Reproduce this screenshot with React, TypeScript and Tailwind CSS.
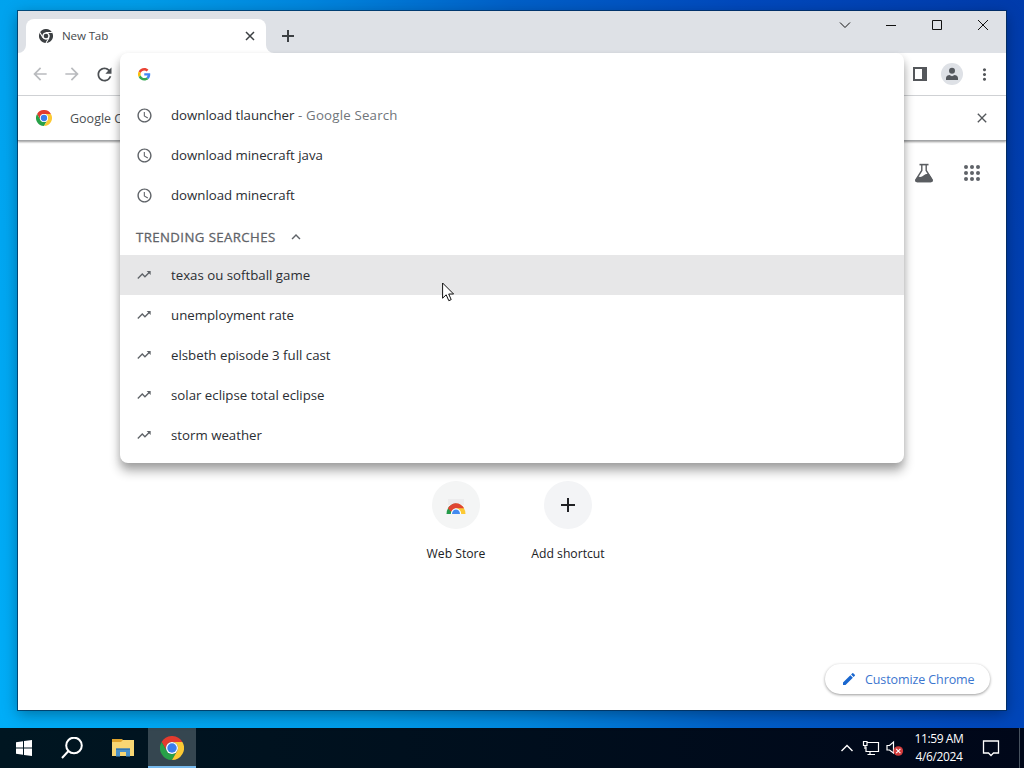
import React from "react";
import {
  MdAccessTime,
  MdAdd,
  MdArrowBack,
  MdArrowForward,
  MdClose,
  MdEdit,
  MdKeyboardArrowUp,
  MdMoreVert,
  MdRefresh,
  MdTrendingUp,
} from "react-icons/md";

const history = [
  { text: "download tlauncher", suffix: "Google Search" },
  { text: "download minecraft java" },
  { text: "download minecraft" },
];

const trending = [
  "texas ou softball game",
  "unemployment rate",
  "elsbeth episode 3 full cast",
  "solar eclipse total eclipse",
  "storm weather",
];

const suggestRow = "flex h-10 items-center pl-4 text-[13.25px] text-[#2b2e33]";

function ChromeLogo({ className, mono = false }: { className: string; mono?: boolean }) {
  const c = mono ? ["#3c4043", "#3c4043", "#3c4043", "#3c4043"] : ["#e33b2e", "#28a148", "#fcc934", "#3b7ded"];
  return (
    <svg viewBox="0 0 48 48" className={className}>
      <path d="M3.2 12A24 24 0 0 1 44.8 12H24A12 12 0 0 0 13.6 30Z" fill={c[0]} />
      <path d="M3.2 12A24 24 0 0 0 24 48L34.4 30A12 12 0 0 1 13.6 30Z" fill={c[1]} />
      <path d="M44.8 12A24 24 0 0 1 24 48L34.4 30A12 12 0 0 0 24 12Z" fill={c[2]} />
      {mono && (
        <path d="M24 12H45M13.6 30L3.2 12M34.4 30L24 48" stroke="#fff" strokeWidth="3.5" fill="none" />
      )}
      <circle cx="24" cy="24" r="12" fill="#fff" />
      <circle cx="24" cy="24" r={mono ? 8 : 9.5} fill={c[3]} />
    </svg>
  );
}

function GoogleG() {
  return (
    <svg viewBox="0 0 48 48" className="size-[12.5px]">
      <path fill="#EA4335" d="M24 9.5c3.54 0 6.71 1.22 9.21 3.6l6.85-6.85C35.9 2.38 30.47 0 24 0 14.62 0 6.51 5.38 2.56 13.22l7.98 6.19C12.43 13.72 17.74 9.5 24 9.5z" />
      <path fill="#4285F4" d="M46.98 24.55c0-1.57-.15-3.09-.38-4.55H24v9.02h12.94c-.58 2.96-2.26 5.48-4.78 7.18l7.73 6c4.51-4.18 7.09-10.36 7.09-17.65z" />
      <path fill="#FBBC05" d="M10.53 28.59c-.48-1.45-.76-2.99-.76-4.59s.27-3.14.76-4.59l-7.98-6.19C.92 16.46 0 20.12 0 24s.92 7.54 2.56 10.78z" />
      <path fill="#34A853" d="M24 48c6.48 0 11.93-2.13 15.89-5.81l-7.73-6c-2.15 1.45-4.92 2.3-8.16 2.3-6.26 0-11.57-4.22-13.47-9.91l-7.98 6.19C6.51 42.62 14.62 48 24 48z" />
    </svg>
  );
}

function TabStrip() {
  return (
    <div className="flex h-[42px] bg-[#dee1e6]">
      <div className="flex w-2 items-end">
        <svg viewBox="0 0 8 8" className="size-2">
          <path d="M8 0V8H0A8 8 0 0 0 8 0Z" fill="#fff" />
        </svg>
      </div>
      <div className="mt-2 flex w-60 items-center rounded-t-lg bg-white pl-[13px] pr-[10px]">
        <ChromeLogo mono className="size-[14px]" />
        <span className="ml-[9px] flex-1 pb-px text-[11.6px] tracking-[-0.15px] text-[#45494d]">New Tab</span>
        <svg viewBox="0 0 12 12" className="size-3">
          <path d="M2 2L10 10M10 2L2 10" stroke="#3c4043" strokeWidth="1.5" />
        </svg>
      </div>
      <div className="flex w-2 items-end">
        <svg viewBox="0 0 8 8" className="size-2">
          <path d="M0 0V8H8A8 8 0 0 1 0 0Z" fill="#fff" />
        </svg>
      </div>
      <div className="mt-[18px] ml-[7px] flex-1">
        <svg viewBox="0 0 14 14" className="size-[14px]">
          <path d="M7 1V13M1 7H13" stroke="#3c4043" strokeWidth="2" />
        </svg>
      </div>
      <div className="flex h-7 items-center">
        {["M3 5.5L8 10.5L13 5.5", "M3 8.5H13", "M3.5 3.5H12.5V12.5H3.5Z", "M3 3L13 13M13 3L3 13"].map((d) => (
          <div key={d} className="flex w-[46px] justify-center">
            <svg viewBox="0 0 16 16" className="size-4">
              <path d={d} fill="none" stroke="#111" strokeWidth="1" />
            </svg>
          </div>
        ))}
      </div>
    </div>
  );
}

function Toolbar() {
  return (
    <div className="flex h-[43px] items-center border-b border-[#d5d7da] bg-white">
      <div className="flex items-center gap-3 pl-3">
        <MdArrowBack className="size-5 text-[#b9bbbe]" />
        <MdArrowForward className="size-5 text-[#b9bbbe]" />
        <MdRefresh className="size-[21px] text-[#4c5054]" />
      </div>
      <div className="ml-auto flex items-center pr-3">
        <svg viewBox="0 0 14 14" className="size-[14px]">
          <path d="M1 1H13V13H1Z" fill="none" stroke="#54575b" strokeWidth="2" />
          <path d="M9 1H13V13H9Z" fill="#54575b" />
        </svg>
        <div className="ml-[14px] flex size-[22px] items-center justify-center rounded-full bg-[#dee1e6]">
          <svg viewBox="0 0 14 14" className="size-[14px]">
            <circle cx="7" cy="3.7" r="3" fill="#54585d" />
            <path d="M1 13V11C1 9 3 8 4.5 8L7 9.3L9.5 8C11 8 13 9 13 11V13Z" fill="#54585d" />
          </svg>
        </div>
        <MdMoreVert className="ml-3 size-[19px] text-[#54575b]" />
      </div>
    </div>
  );
}

function InfoBar() {
  return (
    <div className="relative flex h-[45px] items-center border-b border-[#a3a5a7] bg-white pr-4 pl-[18px] shadow-[0_1px_2px_rgba(0,0,0,0.4)]">
      <ChromeLogo className="size-4" />
      <span className="ml-[18px] flex-1 pt-0.5 text-[12.5px] text-[#4c5054]">Google C</span>
      <MdClose className="size-4 text-[#54575b]" />
    </div>
  );
}

function SuggestPopup() {
  return (
    <div className="absolute top-[42px] left-[102px] h-[410px] w-[784px] rounded-lg bg-white shadow-[0_8px_11px_rgba(0,0,0,0.32),0_3px_7px_rgba(0,0,0,0.1)]">
      <div className="h-[42px] pt-[15px] pl-[18px]">
        <GoogleG />
      </div>
      {history.map((item) => (
        <div key={item.text} className={suggestRow}>
          <MdAccessTime className="size-[17px] text-[#5f6368]" />
          <span className="ml-[18px] pt-0.5 tracking-[-0.02px]">{item.text}</span>
          {item.suffix && (
            <span className="pt-0.5 tracking-[0.2px] whitespace-pre text-[#70757a]">{` - ${item.suffix}`}</span>
          )}
        </div>
      ))}
      <div className="flex h-10 items-center pt-1 pl-4 text-[#5f6368]">
        <span className="pt-px text-[13.2px] font-medium tracking-[0.42px] [-webkit-text-stroke:0.3px_#5f6368]">
          TRENDING SEARCHES
        </span>
        <MdKeyboardArrowUp className="ml-[11px] size-[18px]" />
      </div>
      {trending.map((text, i) => (
        <div key={text} className={`${suggestRow} ${i === 0 ? "bg-[#e7e7e8]" : ""}`}>
          <MdTrendingUp className="size-4 text-[#5f6368]" />
          <span className="ml-[19px] pt-0.5">{text}</span>
        </div>
      ))}
    </div>
  );
}

function NewTabPage() {
  return (
    <div className="flex flex-1 flex-col">
      <div className="flex justify-end gap-[29px] pt-[22px] pr-[25px]">
        <svg viewBox="0 0 20 20" className="size-5">
          <path d="M5.5 1.6H14.5" stroke="#5a5d61" strokeWidth="1.6" />
          <path d="M7.8 2V7.5L2 16.5Q1.2 18.5 3.2 18.5H16.8Q18.8 18.5 18 16.5L12.2 7.5V2" fill="none" stroke="#5a5d61" strokeWidth="1.4" />
          <path d="M4 13.5Q7.5 14.6 9.5 12.5T14.8 10.8L18.5 16.6Q19.2 19.2 16.8 19.2H3.2Q0.8 19.2 1.5 16.6Z" fill="#5a5d61" />
        </svg>
        <svg viewBox="0 0 18 18" className="mt-px size-[18px]" fill="#5f6368">
          {[3, 9, 15].map((y) => [3, 9, 15].map((x) => <circle key={`${x}${y}`} cx={x} cy={y} r="2" />))}
        </svg>
      </div>
      <div className="mt-[298px] flex justify-center text-[12.2px] text-[#202124]">
        <div className="flex w-28 flex-col items-center">
          <div className="flex size-12 items-center justify-center rounded-full bg-[#f4f5f5]">
            <svg viewBox="0 0 20 20" className="size-5">
              <path d="M2 4H18V10H2Z" fill="#ececed" />
              <path d="M0.5 19A9.5 10.5 0 0 1 10 8.5L7 19Z" fill="#249b49" />
              <path d="M19.5 19A9.5 10.5 0 0 0 10 8.5V19Z" fill="#fcc934" />
              <path d="M1.9 13.3A9.5 10.5 0 0 1 18.1 13.3H10L5.2 17Z" fill="#df4532" />
              <path d="M4.8 19A5.2 5.7 0 0 1 15.2 19Z" fill="#fff" />
              <path d="M6 19A4 4.5 0 0 1 14 19Z" fill="#438af0" />
            </svg>
          </div>
          <span className="mt-4">Web Store</span>
        </div>
        <div className="flex w-28 flex-col items-center">
          <div className="flex size-12 items-center justify-center rounded-full bg-[#f3f4f6]">
            <MdAdd className="size-6 text-[#202124]" />
          </div>
          <span className="mt-4">Add shortcut</span>
        </div>
      </div>
      <div className="mt-auto mr-4 mb-4 flex h-[30px] w-[165px] items-center self-end rounded-full bg-white pl-4 text-[#3c76cf] shadow-[0_1px_3px_rgba(0,0,0,0.4)]">
        <MdEdit className="size-4 text-[#1a67cf]" />
        <span className="ml-2 pt-[3px] text-[12.5px] tracking-[-0.1px] whitespace-nowrap">Customize Chrome</span>
      </div>
    </div>
  );
}

function Taskbar() {
  return (
    <div className="flex h-10 items-center bg-gradient-to-r from-[#001621] to-[#000719] text-white">
      <div className="flex w-12 justify-center">
        <svg viewBox="0 0 16 16" className="size-4" fill="#fff">
          <path d="M0 2.2L7 1.2V7.5H0ZM8 1L16 0V7.5H8ZM0 8.5H7V14.8L0 13.8ZM8 8.5H16V16L8 15Z" />
        </svg>
      </div>
      <div className="flex w-12 justify-center">
        <svg viewBox="0 0 22 22" className="size-[22px]" fill="none" stroke="#fff" strokeWidth="2">
          <circle cx="13" cy="8.5" r="7.8" />
          <path d="M7.5 14L1 21" />
        </svg>
      </div>
      <div className="flex w-[52px] justify-center pl-px">
        <svg viewBox="0 0 22 18" className="size-[22px]">
          <path d="M0 0H9L11 1H22V17H0Z" fill="#f8d673" />
          <path d="M0 0H9L11 1L9 3H0Z" fill="#dfa32c" />
          <path d="M4 17.5V9.5H18V17.5H14V13H8V17.5Z" fill="#4a91c9" />
          <path d="M4 9.5H18V11H4Z" fill="#3577af" />
        </svg>
      </div>
      <div className="flex h-10 w-12 items-center justify-center border-b-2 border-[#76b9ed] bg-[#354650] pt-0.5">
        <ChromeLogo className="size-6" />
      </div>
      <div className="ml-auto flex h-10 items-center">
        <svg viewBox="0 0 14 14" className="size-[14px]" fill="none" stroke="#fff" strokeWidth="1.4">
          <path d="M1.5 10L7 4.5L12.5 10" />
        </svg>
        <svg viewBox="0 0 18 16" className="ml-2 h-4 w-[18px]" fill="none" stroke="#fff" strokeWidth="1.2">
          <path d="M5 2.5H16.5V11.5H4V6.5M8 11.5V14.5M5.5 14.5H13" />
          <path d="M1.5 1.5H5V5.5H1.5ZM3 5.5V9" />
        </svg>
        <svg viewBox="0 0 18 18" className="ml-1.5 size-[18px]">
          <path d="M1 6.5H3.5L7.5 3V14L3.5 11H1Z" fill="none" stroke="#fff" strokeWidth="1.2" />
          <circle cx="12.3" cy="12" r="4.8" fill="#d23c3c" />
          <path d="M10.2 9.9L14.4 14.1M14.4 9.9L10.2 14.1" stroke="#fff" strokeWidth="1.1" />
        </svg>
        <div className="ml-1 flex w-[62px] flex-col items-center text-[12px] leading-[18px] tracking-[-0.4px] whitespace-nowrap">
          <span>11:59 AM</span>
          <span>4/6/2024</span>
        </div>
        <svg viewBox="0 0 18 18" className="ml-[12px] size-[18px]" fill="none" stroke="#fff" strokeWidth="1.3">
          <path d="M1.5 2H16.5V14H11.5L9 16.5L6.5 14H1.5Z" />
        </svg>
        <div className="ml-[19px] h-10 w-[5px] border-l border-[#47525f]" />
      </div>
    </div>
  );
}

export default function App() {
  return (
    <div className="relative flex h-[768px] w-[1024px] flex-col overflow-hidden bg-[linear-gradient(73deg,#00aef8_0%,#009ce8_30%,#0086de_43%,#0060c8_59%,#0049bd_77%,#003bab_100%)] font-['Open_Sans','Noto_Sans',sans-serif]">
      <div className="h-[728px] pt-[11px] pl-[18px]">
        <div className="relative flex h-[699px] w-[988px] flex-col bg-white shadow-[0_0_0_1px_rgba(0,40,80,0.7),0_4px_14px_rgba(0,0,0,0.35)]">
          <TabStrip />
          <Toolbar />
          <InfoBar />
          <NewTabPage />
          <SuggestPopup />
        </div>
      </div>
      <Taskbar />
      <svg viewBox="0 0 13 20" className="absolute top-[282px] left-[442px] h-5 w-[13px]">
        <path d="M0.6 1V16.2L4.2 12.8L6.8 18.7L9.2 17.6L6.7 12H11.6Z" fill="#fff" stroke="#111" strokeWidth="1" />
      </svg>
    </div>
  );
}
